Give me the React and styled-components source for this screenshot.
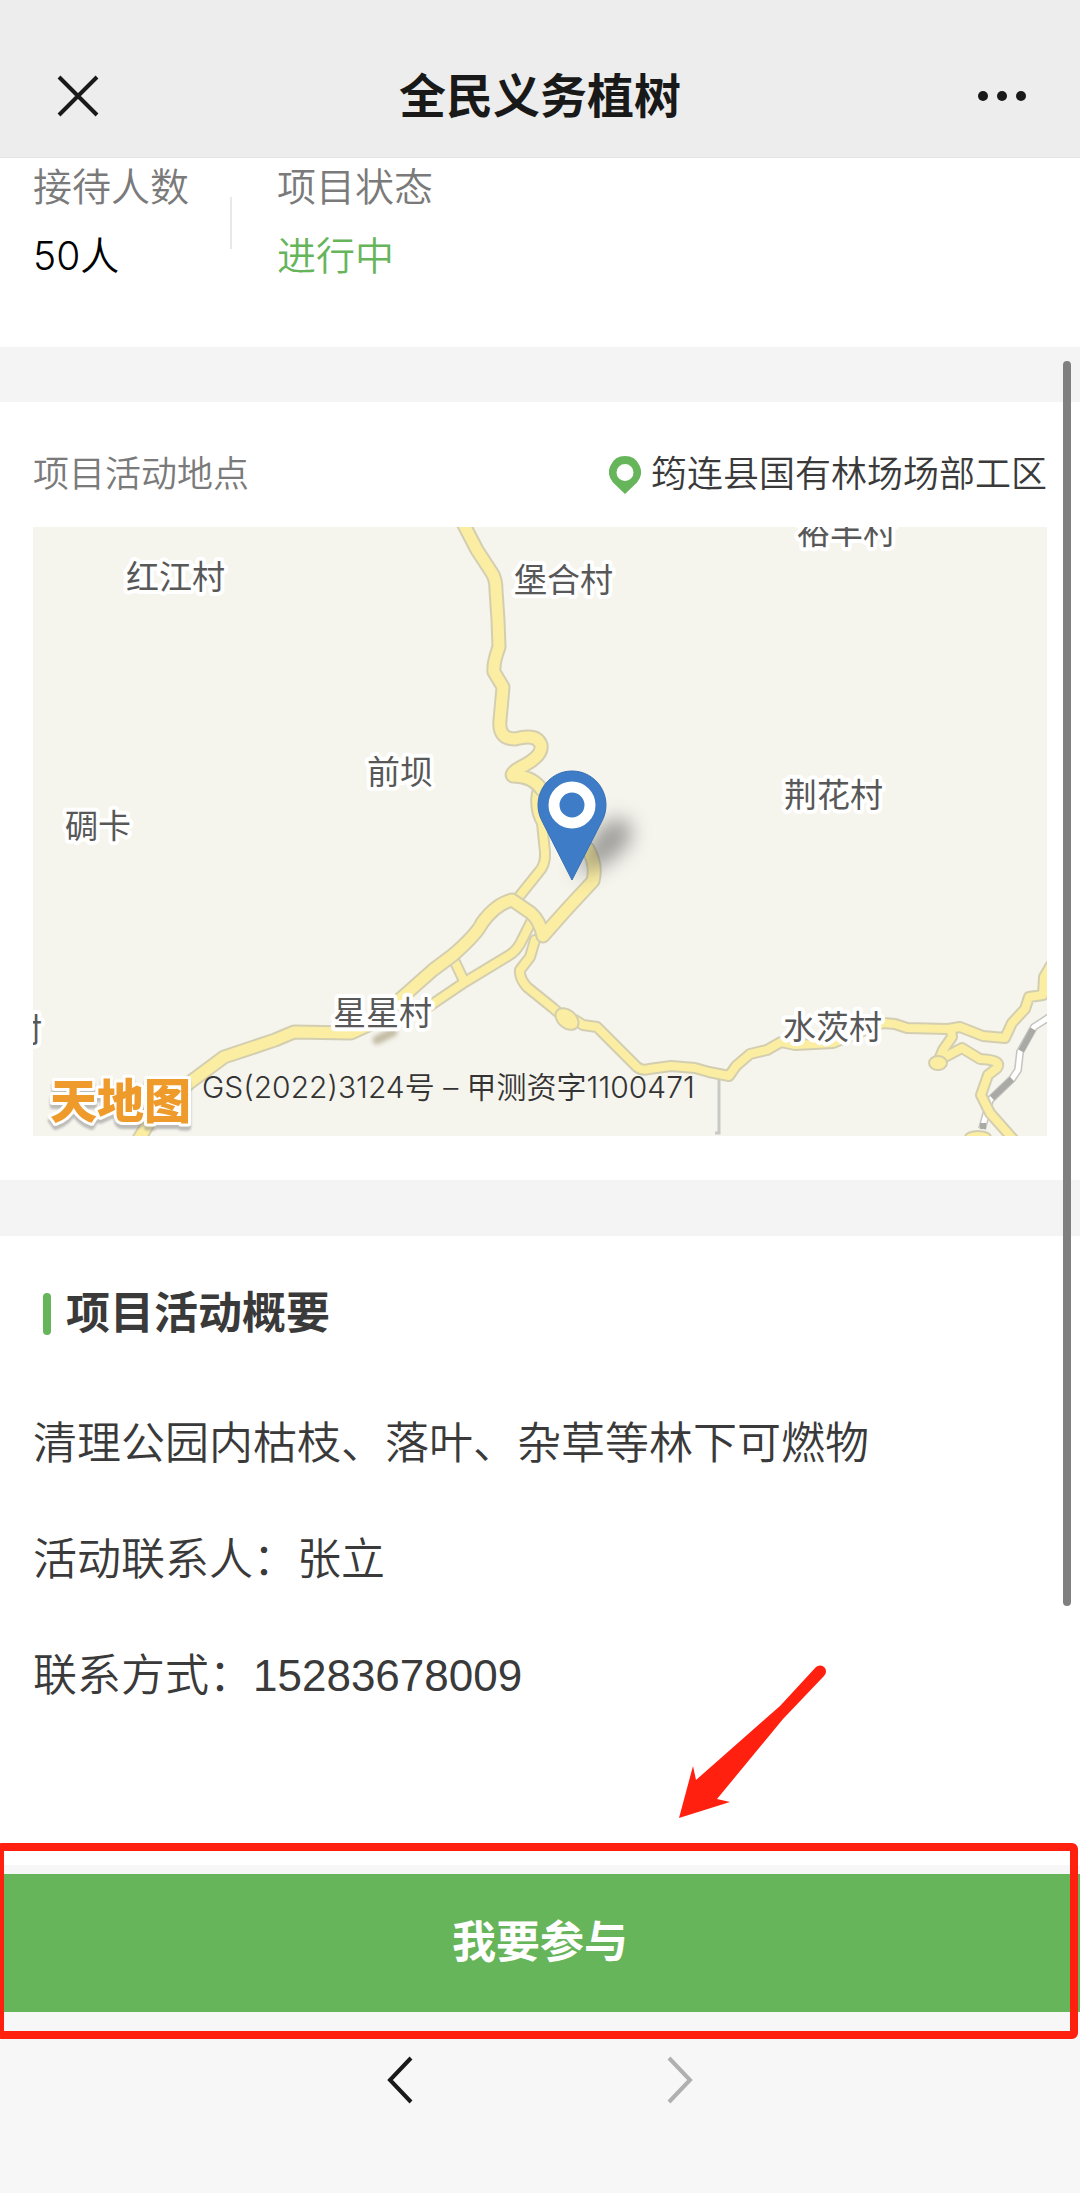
import React from 'react';
import styled, { createGlobalStyle } from 'styled-components';

const colors = {
    green: '#67b55a',
    red: '#ff2010',
    text: '#3a3a3a',
    muted: '#7a7a7a',
    band: '#f4f4f4',
    bar: '#f7f7f7',
};

const gutter = 33;

const GlobalStyle = createGlobalStyle`
    * {
        box-sizing: border-box;
    }

    body {
        margin: 0;
        background: #fff;
        color: ${colors.text};
        font-family: 'Liberation Sans', 'Noto Sans CJK SC', sans-serif;
        font-weight: 350;
    }
`;

const Page = styled.div`
    display: flex;
    flex-direction: column;
    min-height: 100vh;
    overflow: hidden;
`;

const Header = styled.header`
    display: flex;
    align-items: center;
    justify-content: space-between;
    height: 158px;
    padding: 36px 48px 0;
    background: #ededed;
    border-bottom: 1px solid #e4e4e4;
`;

const Title = styled.h1`
    margin: 0;
    color: #191919;
    font-size: 47px;
    font-weight: 700;
    line-height: 60px;
`;

const IconButton = styled.button`
    display: flex;
    align-items: center;
    justify-content: center;
    width: 60px;
    height: 60px;
    padding: 0;
    border: 0;
    background: none;
    color: #191919;

    &:disabled {
        color: #b0b0b0;
    }
`;

const Main = styled.main`
    position: relative;
    flex: 1;
`;

const ScrollThumb = styled.div`
    position: absolute;
    top: 203px;
    right: 9px;
    bottom: 259px;
    width: 8px;
    border-radius: 4px;
    background: #808080;
`;

const Stats = styled.dl`
    display: flex;
    align-items: center;
    margin: 0;
    padding: 2px ${gutter}px 64px;
    font-family: Inter, 'Noto Sans CJK SC', sans-serif;
    font-size: 39px;
    line-height: 54px;
`;

const Stat = styled.div`
    display: flex;
    flex-direction: column;
    gap: 15px;

    & + & {
        position: relative;
        margin-left: 88px;
    }

    & + &::before {
        content: '';
        position: absolute;
        top: 37px;
        left: -47px;
        width: 2px;
        height: 52px;
        background: #e8e8e8;
    }
`;

const StatLabel = styled.dt`
    color: ${colors.muted};
`;

const StatValue = styled.dd`
    margin: 0;
    color: ${props => (props.$active ? colors.green : '#000')};
`;

const Band = styled.div`
    height: ${props => props.$height}px;
    background: ${colors.band};
`;

const LocationSection = styled.section`
    padding: 46px ${gutter}px 44px;
`;

const LocationRow = styled.div`
    display: flex;
    align-items: center;
    justify-content: space-between;
    margin-bottom: 25px;
    font-size: 36px;
    line-height: 54px;
`;

const LocationLabel = styled.span`
    color: ${colors.muted};
`;

const Address = styled.span`
    display: flex;
    align-items: center;
    gap: 10px;
`;

const MapFrame = styled.figure`
    position: relative;
    margin: 0;
    overflow: hidden;
    background: #f5f4ed;

    svg {
        display: block;
        width: 100%;
        height: auto;
    }
`;

const MapCredit = styled.figcaption`
    position: absolute;
    bottom: 29px;
    left: 169px;
    color: #333;
    font-family: Inter, 'Noto Sans CJK SC', sans-serif;
    font-size: 30px;
    line-height: 40px;
`;

const MapLabel = styled.text`
    fill: #585858;
    stroke: #fff;
    stroke-width: 8px;
    stroke-linejoin: round;
    paint-order: stroke;
    font-family: 'Noto Sans CJK SC', sans-serif;
    font-size: 33px;
    font-weight: 400;
`;

const MapLogo = styled.text`
    fill: #ee9b2c;
    stroke: #fff;
    stroke-width: 6px;
    stroke-linejoin: round;
    paint-order: stroke;
    font-family: 'Noto Sans CJK SC', sans-serif;
    font-size: 47px;
    font-weight: 900;
    filter: drop-shadow(0 4px 1px #8888);
`;

const Summary = styled.section`
    display: flex;
    flex-direction: column;
    gap: 56px;
    padding: 48px ${gutter}px 158px;
    font-size: 44px;
    line-height: 60px;
`;

const SummaryTitle = styled.h2`
    display: flex;
    align-items: center;
    gap: 15px;
    margin: 0 0 14px;
    padding-left: 10px;
    font-size: 44px;
    font-weight: 700;

    &::before {
        content: '';
        width: 8px;
        height: 42px;
        border-radius: 4px;
        background: ${colors.green};
    }
`;

const Paragraph = styled.p`
    margin: 0;
`;

const Footer = styled.footer`
    padding-top: 9px;
    background: ${colors.bar};
`;

const JoinArea = styled.div`
    position: relative;
`;

const JoinButton = styled.button`
    display: block;
    width: 100%;
    height: 138px;
    padding: 0 0 8px;
    border: 0;
    background: ${colors.green};
    color: #fff;
    font-family: inherit;
    font-size: 44px;
    font-weight: 700;
`;

const Highlight = styled.div`
    position: absolute;
    top: -31px;
    right: 2px;
    bottom: -27px;
    left: -4px;
    border: 8px solid ${colors.red};
    border-radius: 6px;
    pointer-events: none;
`;

const Arrow = styled.svg`
    position: absolute;
    bottom: calc(100% + 55px);
    left: calc(50% + 138px);
    pointer-events: none;
`;

const BrowserNav = styled.nav`
    display: flex;
    justify-content: center;
    gap: 220px;
    padding: 38px 0 83px;
`;

// Wide county road, drawn above the village roads
const mainRoads = [
    'M430 -4 L444 23 L459 46 Q463 52 463 63 L465 93 L466 120 Q460 136 461 145 L470 160 Q469 172 467 193 Q465 212 482 212 Q504 206 508 218 Q510 228 492 238 Q476 246 480 249 Q500 249 509 263',
    'M555 322 Q564 338 560 354 L534 382 L510 409 Q507 394 498 386 L479 373 Q463 377 449 396 Q444 407 420 428 L400 443 L374 466 L340 496 L318 506 L261 505 L242 513 L191 530 L156 556 L118 592 L106 612',
];

const sideRoads = [
    'M505 262 Q500 280 509 296 L512 325 Q513 338 505 346 L485 371',
    'M499 393 L489 413 Q484 424 475 429 L432 455 L395 480',
    'M422 435 L431 454',
    'M502 413 L497 430 L487 443 Q486 451 494 460 L520 481 L534 493 L542 493 L550 498 L564 500 L587 523 L604 540 Q609 544 616 542 L638 539 L662 541 L676 545 L696 549 L703 539 L717 527 L734 523 L748 515 L762 518 L800 516 L850 496 L862 497 L874 501 L915 502 L927 500 L950 509 L972 511 L979 496 L992 482 L996 470 L1010 468 L1011 450 L1018 438',
    'M918 503 L919 510 L910 523 L905 535 M912 530 L929 521 L947 532 Q970 533 964 541 L955 548 L948 568 L957 586 L980 612',
];

const railway = 'M1018 489 L1001 500 L987 525 L985 543 L979 552 L957 573 L949 602';

const villages = [
    { name: '红江村', x: 93, y: 62 },
    { name: '堡合村', x: 481, y: 65 },
    { name: '裕丰村', x: 764, y: 17 },
    { name: '前坝', x: 334, y: 257 },
    { name: '荆花村', x: 751, y: 280 },
    { name: '碉卡', x: 32, y: 311 },
    { name: '星星村', x: 300, y: 498 },
    { name: '水茨村', x: 750, y: 512 },
    { name: '村', x: -24, y: 515 },
];

const Roads = ({ paths, width }) => (
    <g fill="none" strokeLinejoin="round" strokeLinecap="round">
        {paths.map(d => (
            <path key={d} d={d} stroke="#d3ceb0" strokeWidth={width + 4} />
        ))}
        {paths.map(d => (
            <path key={d} d={d} stroke="#fbeea2" strokeWidth={width} />
        ))}
    </g>
);

const MapDrawing = () => (
    <svg viewBox="0 0 1014 609" role="img" aria-label="项目活动地点">
        <defs>
            <filter id="pinShadow" x="-50%" y="-50%" width="200%" height="200%">
                <feGaussianBlur stdDeviation="10" />
            </filter>
            <filter id="smudge" x="-50%" y="-100%" width="200%" height="300%">
                <feGaussianBlur stdDeviation="2" />
            </filter>
        </defs>
        <path d="M686 546V606h-4" fill="none" stroke="#c9c9c5" strokeWidth="3" />
        <path d={railway} fill="none" stroke="#c4c4c0" strokeWidth="8" />
        <path d={railway} fill="none" stroke="#fff" strokeWidth="5" />
        <path
            d="M1000 502 L988 524 M979 552 L959 571 M950 596v6"
            fill="none"
            stroke="#a9a9a5"
            strokeWidth="6"
        />
        <path d="M344 513 L360 505" stroke="#c4bea6" strokeWidth="9" strokeLinecap="round" filter="url(#smudge)" />
        <Roads paths={sideRoads} width={8} />
        <g fill="#fbeea2" stroke="#d3ceb0" strokeWidth="2">
            <ellipse cx="534" cy="492" rx="13" ry="9" transform="rotate(40 534 492)" />
            <ellipse cx="905" cy="536" rx="9" ry="7" />
            <ellipse cx="945" cy="610" rx="13" ry="6" />
        </g>
        <Roads paths={mainRoads} width={11} />
        <path d="M543 350 Q562 286 592 292 Q612 312 570 338 Z" fill="#555" opacity="0.55" filter="url(#pinShadow)" />
        <path
            d="M539 353 L509 294 A34 34 0 1 1 569 294 Z"
            fill="#3f7cc7"
            stroke="#3470b5"
            strokeWidth="1"
        />
        <circle cx="539" cy="278" r="18" fill="none" stroke="#fff" strokeWidth="11" />
        {villages.map(({ name, x, y }) => (
            <MapLabel key={name} x={x} y={y}>
                {name}
            </MapLabel>
        ))}
        <MapLogo x="17" y="591">
            天地图
        </MapLogo>
    </svg>
);

const CloseIcon = () => (
    <svg width="44" height="44" viewBox="0 0 44 44" stroke="currentColor" strokeWidth="4">
        <path d="M3 2 L41 40 M41 2 L3 40" />
    </svg>
);

const MoreIcon = () => (
    <svg width="50" height="16" viewBox="0 0 50 16" fill="currentColor">
        <circle cx="6" cy="7" r="5" />
        <circle cx="25" cy="7" r="5" />
        <circle cx="44" cy="7" r="5" />
    </svg>
);

const PlaceIcon = () => (
    <svg width="32" height="38" viewBox="0 0 32 38">
        <path
            d="M16 0 A16 16 0 0 0 4 26.500 L16 38 L28 26.500 A16 16 0 0 0 16 0 Z M16 8 A8.500 8.500 0 1 1 16 25 A8.500 8.500 0 1 1 16 8 Z"
            fill={colors.green}
            fillRule="evenodd"
        />
    </svg>
);

const Chevron = ({ d }) => (
    <svg width="28" height="48" viewBox="0 0 28 48" fill="none" stroke="currentColor" strokeWidth="4">
        <path d={d} />
    </svg>
);

const App = () => (
    <Page>
        <GlobalStyle />
        <Header>
            <IconButton aria-label="关闭">
                <CloseIcon />
            </IconButton>
            <Title>全民义务植树</Title>
            <IconButton aria-label="更多">
                <MoreIcon />
            </IconButton>
        </Header>
        <Main>
            <Stats>
                <Stat>
                    <StatLabel>接待人数</StatLabel>
                    <StatValue>50人</StatValue>
                </Stat>
                <Stat>
                    <StatLabel>项目状态</StatLabel>
                    <StatValue $active>进行中</StatValue>
                </Stat>
            </Stats>
            <Band $height={55} />
            <LocationSection>
                <LocationRow>
                    <LocationLabel>项目活动地点</LocationLabel>
                    <Address>
                        <PlaceIcon />
                        筠连县国有林场场部工区
                    </Address>
                </LocationRow>
                <MapFrame>
                    <MapDrawing />
                    <MapCredit>GS(2022)3124号 – 甲测资字1100471</MapCredit>
                </MapFrame>
            </LocationSection>
            <Band $height={56} />
            <Summary>
                <SummaryTitle>项目活动概要</SummaryTitle>
                <Paragraph>清理公园内枯枝、落叶、杂草等林下可燃物</Paragraph>
                <Paragraph>活动联系人：张立</Paragraph>
                <Paragraph>联系方式：15283678009</Paragraph>
            </Summary>
            <ScrollThumb />
        </Main>
        <Footer>
            <JoinArea>
                <JoinButton>我要参与</JoinButton>
                <Highlight />
                <Arrow width="150" height="156" viewBox="0 0 150 156">
                    <path
                        d="M1 155 L15 103 L18 117 L102 43 L138 4 A6 6 0 0 1 146 13 L105 56 L39 136 L52 139 Z"
                        fill={colors.red}
                    />
                </Arrow>
            </JoinArea>
            <BrowserNav>
                <IconButton aria-label="后退">
                    <Chevron d="M25 2 L4 24 L25 46" />
                </IconButton>
                <IconButton aria-label="前进" disabled>
                    <Chevron d="M3 2 L24 24 L3 46" />
                </IconButton>
            </BrowserNav>
        </Footer>
    </Page>
);

export default App;
